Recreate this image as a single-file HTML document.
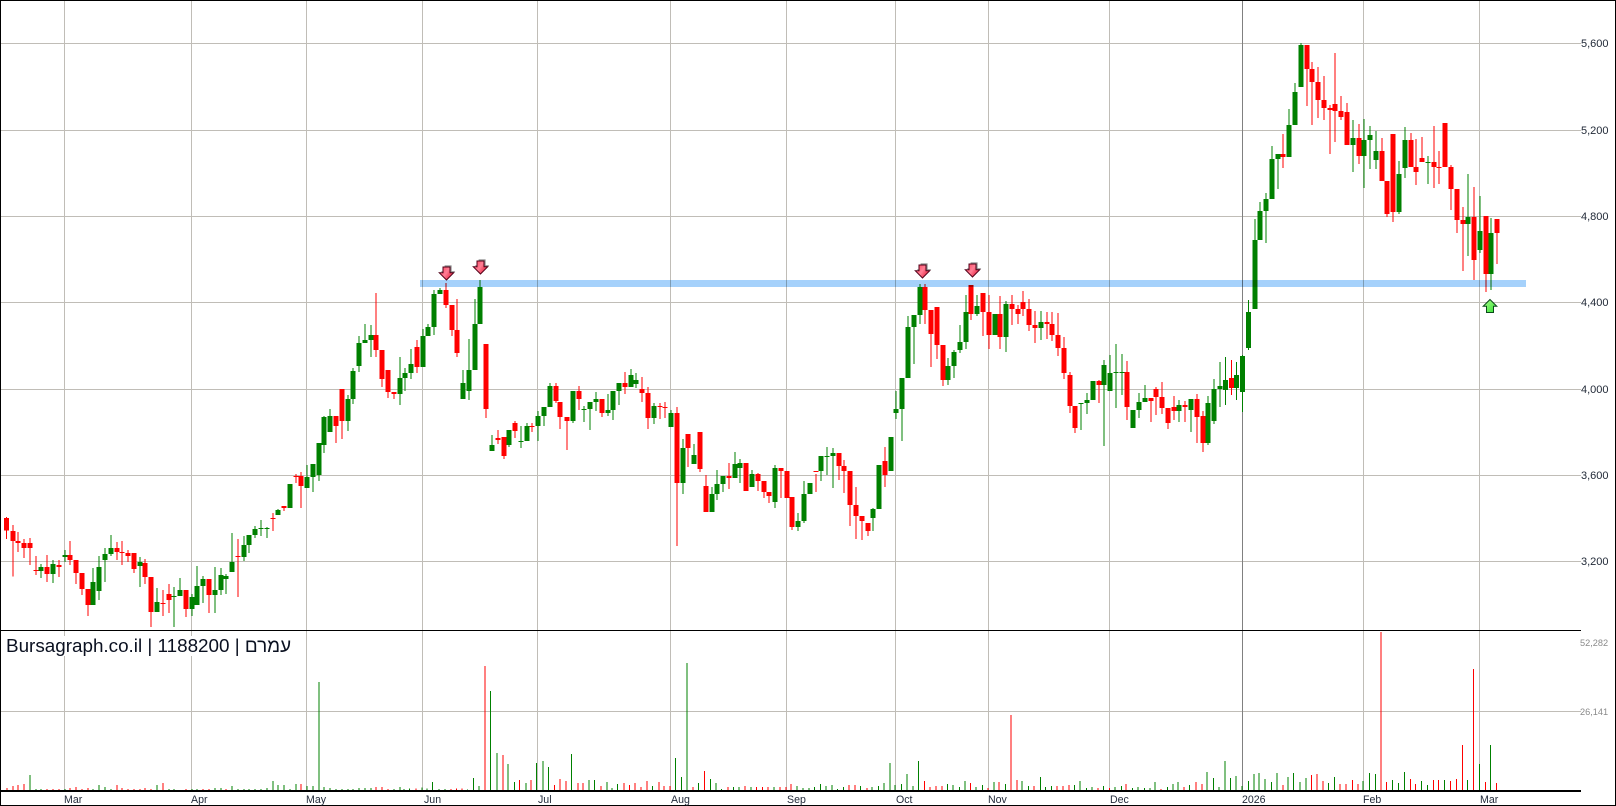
<!DOCTYPE html>
<html lang="en">
<head>
<meta charset="utf-8">
<title>Bursagraph.co.il | 1188200</title>
<style>
html,body{margin:0;padding:0;background:#fff;width:1616px;height:806px;overflow:hidden}
svg{display:block}
text{font-family:"Liberation Sans",Arial,sans-serif}
.wg,.bg,.wr,.br{fill:none;shape-rendering:crispEdges}
.wg,.bg{stroke:#008000}
.wr,.br{stroke:#ff0000}
.wg,.wr{stroke-width:3}
.bg,.br{stroke-width:15}
.vg,.vr{fill:none;shape-rendering:crispEdges}
.vg{stroke:#008000}.vr{stroke:#ff0000}
.px{font-size:11px;fill:#222a38}
.vx{font-size:9.2px;fill:#8a8a8a}
.mx{font-size:10.6px;fill:#222a3a}
</style>
</head>
<body>
<svg width="1616" height="806" viewBox="0 0 1616 806" xmlns="http://www.w3.org/2000/svg">
<defs>
<linearGradient id="rg" x1="0" y1="0" x2="1" y2="0.6"><stop offset="0" stop-color="#ff3a55"/><stop offset=".55" stop-color="#ff7f95"/><stop offset="1" stop-color="#e8203c"/></linearGradient>
<linearGradient id="gg" x1="0" y1="0" x2="1" y2="1"><stop offset="0" stop-color="#b0ff90"/><stop offset="1" stop-color="#30e030"/></linearGradient>
</defs>
<rect width="1616" height="806" fill="#fff"/>

<!-- grid -->
<path shape-rendering="crispEdges" fill="none" stroke="#c0bdb7" stroke-width="1" d="M1 43.5H1581M1 130.5H1581M1 216.5H1581M1 302.5H1581M1 389.5H1581M1 475.5H1581M1 561.5H1581M1 711.5H1581M64.5 1V790M191.5 1V790M306.5 1V790M422.5 1V790M537.5 1V790M670.5 1V790M786.5 1V790M895.5 1V790M988.5 1V790M1109.5 1V790M1363.5 1V790M1479.5 1V790"/>
<path shape-rendering="crispEdges" fill="none" stroke="#808080" stroke-width="1" d="M1242.5 1V790"/>

<!-- candles region 1 -->
<g transform="translate(0.5,480) scale(.33333)">
<path class="wg" d="M121 252V294M157 240V309M193 210V246M277 264V375M295 228V360M313 204V306M331 165V228M418 231V321M469 324V396M520 321V441M538 294V348M574 342V408M589 258V375M607 288V369M643 261V399M661 264V345M676 282V342M694 159V276M730 168V243M745 165V219M763 138V174M781 120V168M799 141V174M832 87V105M868 12V84"/>
<path class="bg" d="M121 261V273M157 252V282M193 225V231M277 306V375M295 261V333M313 222V240M331 204V222M418 246V258M469 366V396M520 348V351M538 330V348M574 351V387M589 318V375M607 297V318M643 330V345M661 285V330M676 288V297M694 246V276M730 195V231M745 165V195M763 147V165M781 144V147M799 144V147M832 90V105M868 12V84"/>
<path class="wr" d="M18 111V177M37 135V290M52 156V216M70 177V234M88 174V255M106 228V285M139 225V306M175 240V291M208 183V255M226 240V312M244 279V345M262 327V408M349 186V240M364 183V255M382 210V246M400 219V279M433 237V312M451 291V441M487 330V408M505 312V399M556 330V411M625 297V399M712 177V351M817 99V153M850 78V93"/>
<path class="br" d="M18 114V152M37 153V183M52 183V189M70 189V204M88 189V204M106 270V273M139 261V282M175 255V261M208 225V240M226 240V279M244 279V327M262 327V375M349 204V216M364 216V219M382 219V228M400 219V267M433 249V291M451 291V396M487 369V372M505 342V360M556 330V387M625 297V345M712 228V231M817 114V117M850 78V84"/>
</g>

<!-- region 1b -->
<g transform="translate(280.5,440) scale(.33333)">
<path class="wg" d="M79 75V144M97 72V156M115 9V123"/>
<path class="bg" d="M79 111V144M97 72V111M115 9V105"/>
<path class="wr" d="M46 102V129M61 96V204"/>
<path class="br" d="M46 108V111M61 108V138"/>
</g>

<!-- region 2 -->
<g transform="translate(300.5,280) scale(.33333)">
<path class="wg" d="M70 408V519M88 387V456M142 345V453M157 264V372M175 168V276M193 132V189M211 135V231M298 231V375M313 264V333M331 207V297M367 147V261M382 132V168M400 30V165M418 24V42M487 270V357M505 177V360M523 57V270M538 0V132M574 465V513M625 450V501M661 438V504M679 429V483M712 393V483M730 381V438M748 309V381"/>
<path class="bg" d="M70 411V495M88 408V456M142 357V423M157 273V357M175 189V258M193 180V189M211 165V180M298 294V342M313 279V294M331 252V279M367 168V261M382 141V168M400 42V141M418 30V42M487 309V357M505 270V333M523 132V270M538 21V132M574 495V513M625 450V495M661 483V486M679 438V483M712 408V438M730 381V408M748 318V381"/>
<path class="wr" d="M106 408V489M124 327V477M226 39V231M244 210V321M262 270V354M280 336V357M349 180V279M436 9V84M454 75V168M469 57V231M556 192V414M592 450V492M610 471V537M643 423V474M694 429V456M766 309V369"/>
<path class="br" d="M106 408V438M124 327V423M226 165V210M244 210V297M262 270V336M280 336V342M349 201V261M436 30V75M454 75V150M469 150V219M556 192V387M592 474V480M610 471V528M643 429V453M694 438V441M766 318V363"/>
</g>

<!-- region 3 -->
<g transform="translate(560.5,360) scale(.33333)">
<path class="wg" d="M37 93V189M70 138V186M88 126V210M106 96V153M142 102V168M157 93V180M175 69V135M211 27V81M226 39V84M280 129V192M331 150V201M367 237V402M400 252V312M454 381V456M469 330V420M487 348V396M523 276V354M538 297V369M574 330V381M643 315V444M712 459V513M730 363V489M748 369V402M781 288V363M799 261V345M817 264V384M937 444V513M955 315V447M991 231V333M1006 93V177"/>
<path class="bg" d="M37 93V183M70 147V150M88 126V147M106 117V126M142 150V159M157 93V150M175 69V93M211 45V81M226 60V72M280 138V174M331 159V201M367 264V369M400 285V312M454 402V456M469 372V402M487 348V372M523 312V354M538 309V324M574 342V381M643 324V426M712 483V501M730 402V483M748 369V402M781 288V333M799 288V291M817 279V288M937 447V474M955 315V447M991 231V333M1006 147V159"/>
<path class="wr" d="M-1 126V207M19 171V270M55 78V150M124 117V171M193 36V102M244 51V126M262 81V207M298 129V177M313 126V174M349 141V558M382 222V321M418 216V336M436 345V456M505 309V387M556 309V393M592 339V393M610 363V414M625 396V429M661 324V414M679 333V414M694 411V510M766 342V396M835 279V360M850 300V399M868 333V498M886 381V537M904 468V540M922 489V528M973 261V381"/>
<path class="br" d="M-1 126V171M19 171V183M55 93V117M124 117V159M193 69V81M244 87V99M262 99V174M298 138V141M313 141V144M349 159V369M382 222V264M418 216V327M436 378V456M505 348V354M556 309V393M592 342V363M610 363V396M625 396V408M661 324V333M679 333V414M694 411V501M766 333V336M835 279V318M850 318V333M868 333V435M886 435V468M904 468V483M922 489V513M973 303V345"/>
</g>

<!-- region 4 -->
<g transform="translate(880.5,270) scale(.33333)">
<path class="wg" d="M64 324V513M82 138V324M100 135V282M118 42V162M202 264V345M220 240V324M238 165V249M256 75V237M289 75V138M343 132V195M376 93V246M481 123V210M601 399V480M619 369V432M637 333V390M670 270V528M688 255V363M706 222V414M724 252V375M757 420V474M775 369V444M793 345V396M895 390V456M931 387V486M982 378V525M1000 327V462M1018 276V411"/>
<path class="bg" d="M64 324V417M82 171V324M100 135V171M118 51V135M202 288V330M220 246V288M238 216V240M256 126V216M289 108V132M343 132V195M376 102V201M481 156V174M601 399V402M619 390V399M637 333V390M670 285V345M688 309V363M706 306V309M724 306V309M757 420V474M775 396V420M793 384V396M895 405V423M931 387V420M982 399V519M1000 357V453M1018 348V357"/>
<path class="wr" d="M133 42V162M151 120V291M169 111V267M187 225V348M271 45V150M307 69V198M325 75V237M358 78V237M394 75V165M412 105V162M427 63V138M445 87V183M463 123V219M499 126V207M514 126V213M532 129V258M550 201V327M568 306V429M583 408V489M655 330V399M739 273V450M811 384V456M826 351V435M844 336V432M862 414V477M880 378V450M913 393V456M949 372V519M967 423V546"/>
<path class="br" d="M133 51V120M151 120V192M169 111V225M187 225V330M271 45V132M307 69V126M325 126V195M358 132V201M394 102V117M412 117V132M427 96V117M445 117V165M463 165V174M499 156V162M514 162V195M532 195V234M550 234V309M568 315V408M583 408V474M655 333V345M739 306V411M811 384V393M826 357V381M844 381V414M862 414V459M880 411V423M913 405V411M949 387V441M967 438V519"/>
</g>

<!-- region 5 -->
<g transform="translate(1200.5,30) scale(.33333)">
<path class="wg" d="M75 981V1125M108 996V1110M126 975V1146M144 810V960M163 567V837M178 516V630M196 489V639M214 348V507M232 372V477M265 237V381M283 159V285M301 39V171M457 270V426M490 267V474M508 288V417M526 303V417M595 393V552M613 291V444M682 378V462M802 432V678"/>
<path class="bg" d="M75 1050V1080M108 1035V1074M126 978V1086M144 846V954M163 630V837M178 543V630M196 507V543M214 387V507M232 372V387M265 285V381M283 186V285M301 45V171M457 324V345M490 330V378M508 315V330M526 363V390M595 432V546M613 330V414M682 396V399M802 561V582"/>
<path class="wr" d="M93 990V1095M247 312V414M319 45V228M334 96V285M352 111V264M370 138V270M388 225V372M403 69V336M421 198V270M439 219V345M475 282V402M544 324V453M559 453V561M577 312V576M631 309V411M646 327V465M664 321V396M700 288V474M715 363V462M733 279V411M751 405V540M769 477V609M787 531V723M820 471V750"/>
<path class="br" d="M93 1044V1074M247 372V381M319 45V117M334 117V156M352 156V210M370 210V234M388 234V240M403 222V243M421 243V261M439 246V345M475 324V378M544 363V453M559 453V552M577 312V546M631 330V411M646 411V426M664 384V396M700 396V411M715 411V414M733 279V411M751 411V477M769 477V570M787 570V582M820 561V690"/>
</g>

<!-- region 6 -->
<g transform="translate(1380.5,0) scale(.33333)">
<path class="wg" d="M298 588V759M331 654V870"/>
<path class="bg" d="M298 693V750M331 699V822"/>
<path class="wr" d="M316 648V876M349 657V792"/>
<path class="br" d="M316 648V822M349 657V699"/>
</g>

<!-- support band -->
<rect x="420" y="280" width="1106" height="7" fill="#a5d1fb" style="mix-blend-mode:multiply"/>

<!-- down arrows -->
<g transform="translate(446.5,280)"><polygon transform="translate(1.6,-1.6)" points="0,0 7.2,-7.2 3.5,-7.2 3.5,-13 -3.5,-13 -3.5,-7.2 -7.2,-7.2" fill="#8a8a8a"/><polygon points="0,0 7.2,-7.2 3.5,-7.2 3.5,-13 -3.5,-13 -3.5,-7.2 -7.2,-7.2" fill="url(#rg)" stroke="#500018" stroke-width="1"/></g>
<g transform="translate(480.5,274)"><polygon transform="translate(1.6,-1.6)" points="0,0 7.2,-7.2 3.5,-7.2 3.5,-13 -3.5,-13 -3.5,-7.2 -7.2,-7.2" fill="#8a8a8a"/><polygon points="0,0 7.2,-7.2 3.5,-7.2 3.5,-13 -3.5,-13 -3.5,-7.2 -7.2,-7.2" fill="url(#rg)" stroke="#500018" stroke-width="1"/></g>
<g transform="translate(922.5,278)"><polygon transform="translate(1.6,-1.6)" points="0,0 7.2,-7.2 3.5,-7.2 3.5,-13 -3.5,-13 -3.5,-7.2 -7.2,-7.2" fill="#8a8a8a"/><polygon points="0,0 7.2,-7.2 3.5,-7.2 3.5,-13 -3.5,-13 -3.5,-7.2 -7.2,-7.2" fill="url(#rg)" stroke="#500018" stroke-width="1"/></g>
<g transform="translate(972.5,277)"><polygon transform="translate(1.6,-1.6)" points="0,0 7.2,-7.2 3.5,-7.2 3.5,-13 -3.5,-13 -3.5,-7.2 -7.2,-7.2" fill="#8a8a8a"/><polygon points="0,0 7.2,-7.2 3.5,-7.2 3.5,-13 -3.5,-13 -3.5,-7.2 -7.2,-7.2" fill="url(#rg)" stroke="#500018" stroke-width="1"/></g>
<!-- up arrow -->
<g transform="translate(1490,299.5)"><polygon points="0,0 6.8,6.8 3.5,6.8 3.5,13 -3.5,13 -3.5,6.8 -6.8,6.8" fill="url(#gg)" stroke="#0a4a1a" stroke-width="1"/></g>

<!-- volume -->
<g transform="translate(0.5,620) scale(.33333)">
<path class="vg" stroke-width="3" d="M88 465V510M106 507V510M121 507V510M193 507V510M277 507V510M295 495V510M313 501V510M331 507V510M469 495V510M505 507V510M520 507V510M574 507V510M589 507V510M643 504V510M661 504V510M694 498V510M712 507V510M730 507V510M745 507V510M763 507V510M781 507V510M799 504V510M817 483V510M832 495V510M850 495V510M868 507V510M886 492V510M919 498V510M937 498V510M955 186V510M970 501V510M988 504V510M1006 507V510M1024 507V510M1042 507V510M1057 507V510M1075 504V510M1093 504V510M1111 504V510M1180 507V510M1198 501V510"/>
<path class="vr" stroke-width="3" d="M19 504V510M37 498V510M52 495V510M70 492V510M139 507V510M157 507V510M175 507V510M208 504V510M226 501V510M244 507V510M262 504V510M349 495V510M364 504V510M382 507V510M400 507V510M418 507V510M433 504V510M451 507V510M487 489V510M556 507V510M607 507V510M625 507V510M676 507V510M901 492V510M1126 501V510M1144 501V510M1162 507V510"/>
</g>
<g transform="translate(399.5,630) scale(.63776,.33333)">
<path class="vg" stroke-width="1.568" d="M7 477V480M16 475V480M35 472V480M43 475V480M52 456V480M62 477V480M71 477V480M107 478V480M116 444V480M125 468V480M143 183V480M153 369V480M170 402V480M180 456V480M198 459V480M215 399V480M225 393V480M234 411V480M270 372V480M297 450V480M306 450V480M325 456V480M333 474V480M342 462V480M397 468V480M433 384V480M442 441V480M451 99V480M469 459V480M488 447V480M496 459V480M505 477V480M524 471V480M532 471V480M551 471V480M587 471V480M623 468V480M633 474V480M642 474V480M651 471V480M660 462V480M669 468V480M678 465V480M687 477V480M696 471V480M723 468V480M741 471V480M751 468V480M760 459V480M769 399V480M777 465V480M787 462V480M796 432V480M805 468V480M814 393V480M859 462V480M868 465V480M878 471V480M887 453V480M904 471V480M914 465V480M932 456V480M950 462V480M976 453V480M986 468V480M1005 441V480M1013 471V480M1022 468V480M1058 465V480M1067 453V480M1077 474V480M1086 471V480M1104 468V480M1122 471V480M1132 468V480M1149 474V480M1158 471V480M1168 474V480M1177 474V480M1185 456V480M1204 471V480M1213 462V480M1221 456V480M1239 465V480M1266 426V480M1276 444V480M1285 471V480M1294 393V480M1303 444V480M1312 438V480M1321 468V480M1331 453V480M1340 432V480M1348 429V480M1357 447V480M1367 456V480M1376 429V480M1393 441V480M1402 429V480M1412 456V480M1421 444V480M1457 459V480M1466 441V480M1511 453V480M1521 429V480M1530 432V480"/>
<path class="vr" stroke-width="1.568" d="M26 475V480M81 477V480M89 475V480M98 475V480M134 108V480M162 375V480M188 450V480M206 450V480M243 465V480M252 447V480M261 453V480M280 459V480M288 459V480M316 468V480M352 459V480M361 465V480M369 459V480M379 471V480M388 453V480M407 456V480M415 468V480M424 468V480M460 471V480M478 423V480M515 471V480M542 468V480M560 471V480M569 471V480M578 471V480M597 471V480M606 471V480M614 462V480M705 465V480M714 465V480M733 474V480M823 453V480M832 471V480M841 468V480M851 468V480M895 459V480M923 474V480M940 456V480M959 255V480M968 450V480M995 468V480M1031 468V480M1040 468V480M1050 465V480M1095 474V480M1113 474V480M1139 462V480M1194 477V480M1230 471V480M1249 456V480M1258 462V480M1385 465V480M1430 435V480M1439 432V480M1448 453V480M1475 462V480M1484 462V480M1494 450V480M1503 462V480M1539 6V480"/>
</g>
<g transform="translate(1380,620) scale(.33333)">
<path class="vg" stroke-width="3" d="M37 480V510M55 489V510M73 456V510M124 483V510M142 495V510M193 480V510M262 480V510M298 432V510M331 375V510"/>
<path class="vr" stroke-width="3" d="M19 486V510M91 477V510M106 492V510M160 480V510M175 480V510M211 483V510M229 477V510M247 375V510M280 147V510M316 486V510M349 489V510"/>
</g>

<!-- frame and axes -->
<path shape-rendering="crispEdges" fill="none" stroke="#000" stroke-width="1" d="M0.5 0.5H1615.5V805.5H0.5ZM1 630.5H1581"/>
<path shape-rendering="crispEdges" fill="none" stroke="#000" stroke-width="2" d="M1 791H1581"/>

<!-- title -->
<rect x="5" y="636" width="286" height="20" fill="#fff"/>
<text x="6" y="652" font-size="18.85" fill="#0a1020" direction="ltr">Bursagraph.co.il | 1188200 | עמרם</text>

<!-- price labels -->
<text class="px" x="1581" y="47">5,600</text>
<text class="px" x="1581" y="134">5,200</text>
<text class="px" x="1581" y="220">4,800</text>
<text class="px" x="1581" y="306">4,400</text>
<text class="px" x="1581" y="393">4,000</text>
<text class="px" x="1581" y="479">3,600</text>
<text class="px" x="1581" y="565">3,200</text>
<text class="vx" x="1580" y="646">52,282</text>
<text class="vx" x="1580" y="715">26,141</text>

<!-- month labels -->
<text class="mx" x="64" y="803">Mar</text>
<text class="mx" x="191" y="803">Apr</text>
<text class="mx" x="306" y="803">May</text>
<text class="mx" x="424" y="803">Jun</text>
<text class="mx" x="538" y="803">Jul</text>
<text class="mx" x="671" y="803">Aug</text>
<text class="mx" x="787" y="803">Sep</text>
<text class="mx" x="896" y="803">Oct</text>
<text class="mx" x="988" y="803">Nov</text>
<text class="mx" x="1110" y="803">Dec</text>
<text class="mx" x="1242" y="803">2026</text>
<text class="mx" x="1363" y="803">Feb</text>
<text class="mx" x="1480" y="803">Mar</text>
</svg>
</body>
</html>
